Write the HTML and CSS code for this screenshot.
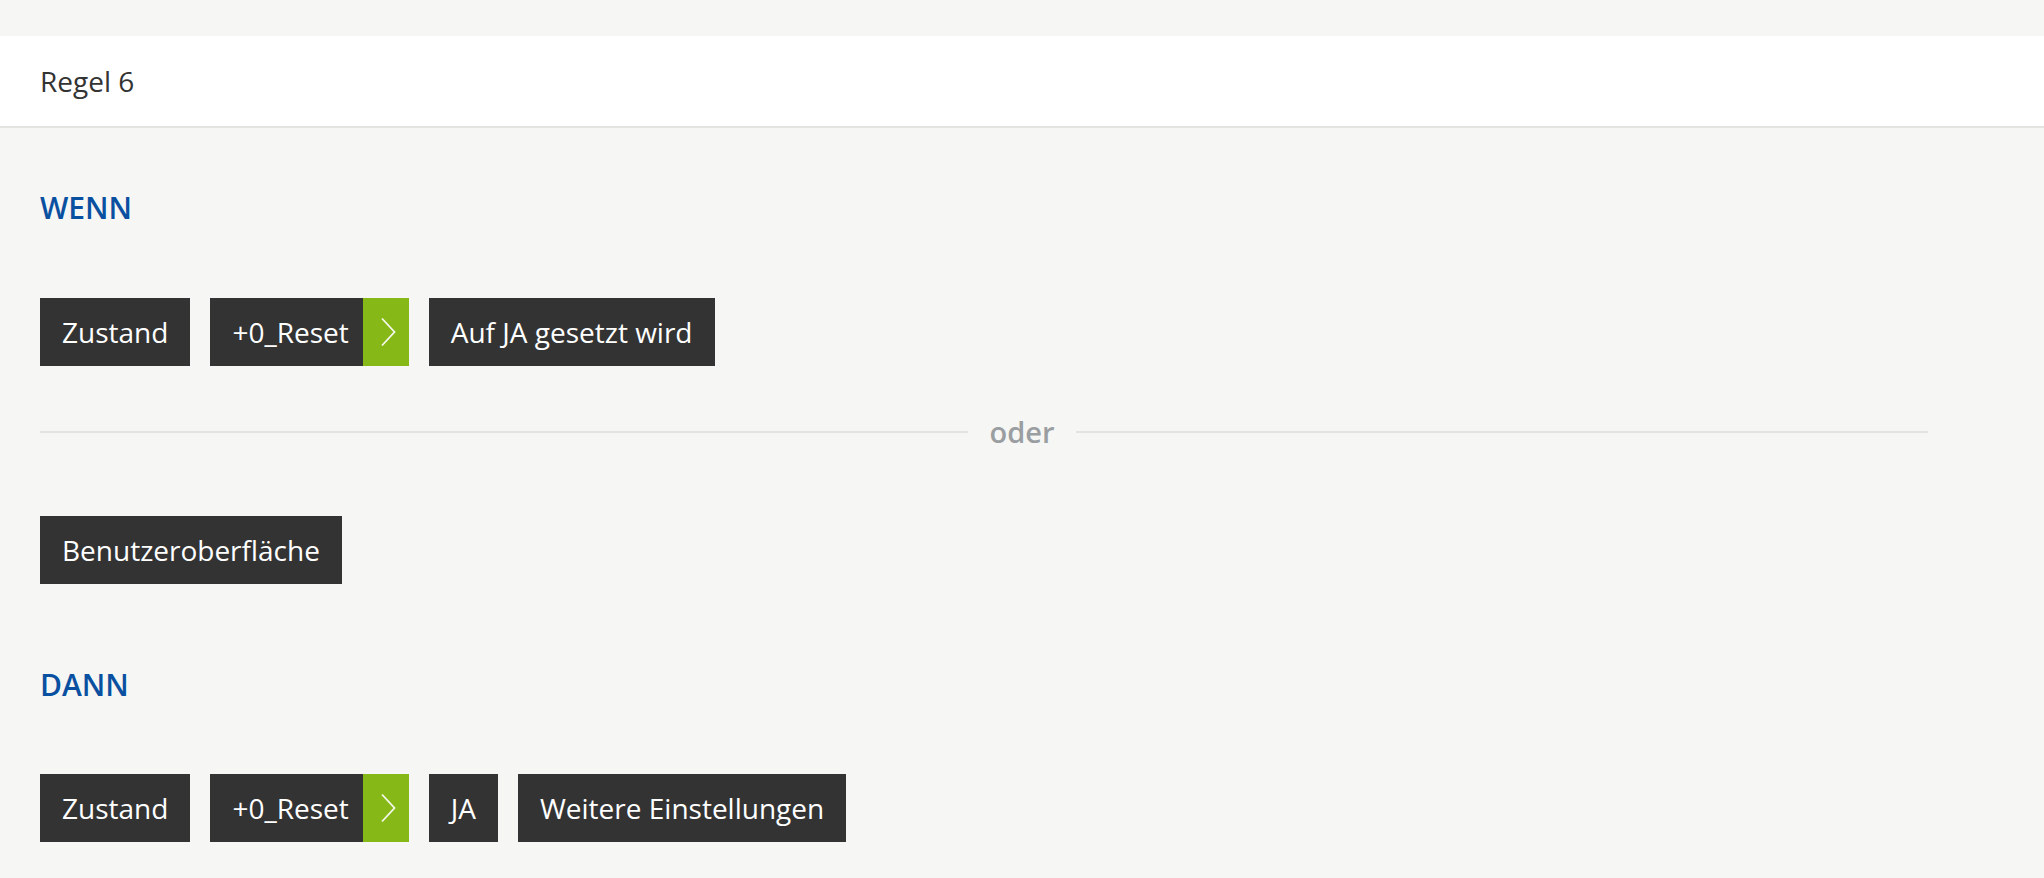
FILE: index.html
```html
<!DOCTYPE html>
<html lang="de">
<head>
<meta charset="utf-8">
<title>Regel 6</title>
<link rel="stylesheet" href="styles.css">
</head>
<body>
<div class="page">
  <header class="header">Regel 6</header>
  <main class="content">
    <h2 class="heading heading-if">WENN</h2>
    <div class="row">
      <div class="chip">Zustand</div>
      <div class="chip chip-split">
        <span class="chip-label">+0_Reset</span>
        <span class="chip-arrow"><svg width="16" height="30" viewBox="0 0 16 30"><path d="M2 1.5 L14.5 15 L2 28.5" fill="none" stroke="#f4f8ea" stroke-width="1.8"/></svg></span>
      </div>
      <div class="chip">Auf JA gesetzt wird</div>
    </div>
    <div class="divider">
      <span class="line"></span>
      <span class="divider-label">oder</span>
      <span class="line line-right"></span>
    </div>
    <div class="row">
      <div class="chip">Benutzeroberfläche</div>
    </div>
    <h2 class="heading heading-then">DANN</h2>
    <div class="row">
      <div class="chip">Zustand</div>
      <div class="chip chip-split">
        <span class="chip-label">+0_Reset</span>
        <span class="chip-arrow"><svg width="16" height="30" viewBox="0 0 16 30"><path d="M2 1.5 L14.5 15 L2 28.5" fill="none" stroke="#f4f8ea" stroke-width="1.8"/></svg></span>
      </div>
      <div class="chip">JA</div>
      <div class="chip">Weitere Einstellungen</div>
    </div>
  </main>
</div>
</body>
</html>
```
FILE: styles.css
```css
html, body {
  margin: 0;
  padding: 0;
}
body {
  background: #f6f6f4;
  font-family: "Open Sans", "Noto Sans", sans-serif;
  color: #333;
  overflow: hidden;
}
.page {
  padding-top: 36px;
}
.header {
  height: 90px;
  background: #fff;
  border-bottom: 2px solid #e3e3df;
  padding: 0 40px;
  display: flex;
  align-items: center;
  font-size: 28px;
  font-weight: 400;
  color: #333;
}
.content {
  padding: 0 40px;
}
.heading {
  margin: 0;
  font-size: 30px;
  line-height: 40px;
  font-weight: 600;
  color: #0a50a1;
}
.heading-if {
  margin-top: 60px;
  margin-bottom: 70px;
}
.heading-then {
  margin-top: 81px;
  margin-bottom: 69px;
}
.row {
  display: flex;
  gap: 20px;
}
.chip {
  height: 68px;
  background: #333;
  color: #fff;
  padding: 0 22px;
  display: flex;
  align-items: center;
  font-size: 28px;
  font-weight: 400;
  white-space: nowrap;
}
.chip-split {
  padding: 0;
  align-items: stretch;
}
.chip-label {
  display: flex;
  align-items: center;
  padding: 0 14px 0 22px;
}
.chip-arrow {
  width: 46px;
  background: #86b817;
  display: flex;
  align-items: center;
  justify-content: center;
  padding-left: 5px;
  box-sizing: border-box;
}
.divider {
  display: grid;
  grid-template-columns: 1fr auto 1fr;
  align-items: center;
  height: 40px;
  margin-top: 46px;
  margin-bottom: 64px;
}
.line {
  height: 2px;
  background: #e3e3e0;
}
.line-right {
  margin-right: 76px;
}
.divider-label {
  padding: 0 22px;
  font-size: 29px;
  line-height: 40px;
  font-weight: 600;
  color: #9a9ea1;
}
```
